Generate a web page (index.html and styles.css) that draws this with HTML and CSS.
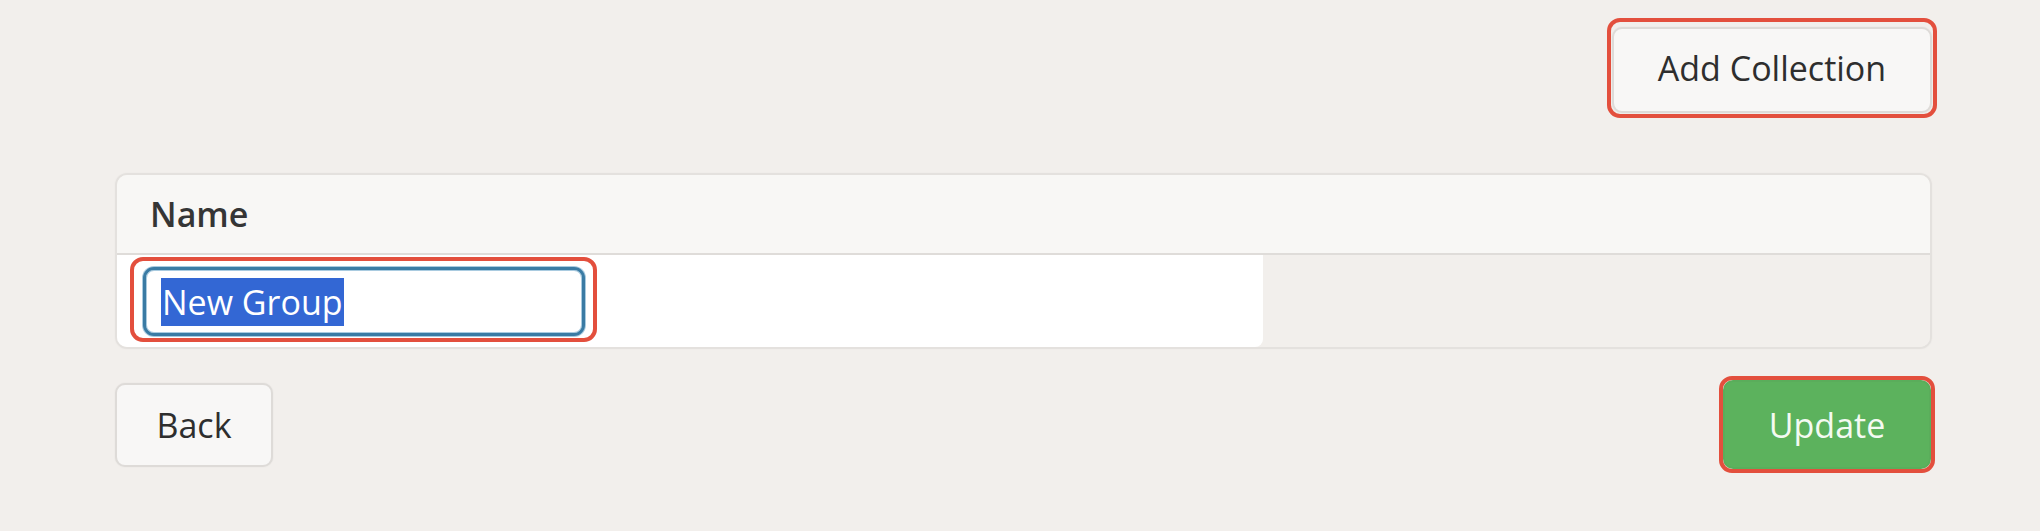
FILE: index.html
```html
<!DOCTYPE html>
<html>
<head>
<meta charset="utf-8">
<link rel="stylesheet" href="styles.css">
</head>
<body>
<div class="page">
  <div class="top-row">
    <div class="mark mark-add">
      <button class="btn btn-default btn-add">Add Collection</button>
    </div>
  </div>
  <div class="card">
    <div class="card-head">Name</div>
    <div class="card-body">
      <div class="cell">
        <div class="mark mark-input">
          <div class="input"><span class="sel">New Group</span></div>
        </div>
      </div>
    </div>
  </div>
  <div class="bottom-row">
    <button class="btn btn-default btn-back">Back</button>
    <div class="mark mark-update">
      <button class="btn btn-success btn-update">Update</button>
    </div>
  </div>
</div>
</body>
</html>
```
FILE: styles.css
```css
html, body {
  margin: 0;
  padding: 0;
  background: #f2efec;
}
body {
  font-family: "Open Sans", "Liberation Sans", sans-serif;
  color: #333;
  width: 2040px;
  height: 531px;
  overflow: hidden;
}
.page {
  padding: 27px 108px 0 115px;
}
.top-row {
  display: flex;
  justify-content: flex-end;
}
.mark {
  position: relative;
  display: inline-block;
}
.mark::after {
  content: "";
  position: absolute;
  border: 4px solid #e34f3d;
  border-radius: 13px;
  pointer-events: none;
}
.mark-add::after { top: -9px; left: -5px; right: -5px; bottom: -5px; }
.mark-update::after { top: -4px; left: -4px; right: -4px; bottom: -4px; }
.mark-input::after { top: -10px; left: -13px; right: -12px; bottom: -6px; }

.btn {
  display: flex;
  align-items: center;
  justify-content: center;
  box-sizing: border-box;
  font-family: "Open Sans", "Liberation Sans", sans-serif;
  font-size: 34px;
  padding: 0;
  margin: 0;
  border-radius: 10px;
  cursor: pointer;
}
.btn-default {
  background: #f8f7f6;
  border: 2px solid #dedbd8;
  color: #2e2e2e;
  box-shadow: 0 0 2px rgba(0,0,0,0.06);
}
.btn-add {
  width: 320px;
  height: 86px;
  padding-bottom: 4px;
}
.btn-back {
  width: 158px;
  height: 84px;
}
.btn-success {
  background: #5cb25d;
  border: 2px solid #5aad5b;
  color: #f4faf2;
}
.btn-update {
  width: 208px;
  height: 89px;
}

.card {
  margin-top: 60px;
  border: 2px solid #e4e1de;
  border-radius: 12px;
  overflow: hidden;
  box-shadow: 0 0 2px rgba(0,0,0,0.04);
}
.card-head {
  height: 78px;
  background: #f8f7f5;
  border-bottom: 2px solid #dfdcd9;
  display: flex;
  align-items: center;
  padding-left: 33px;
  font-size: 34px;
  font-weight: 600;
  color: #353535;
}
.card-body {
  height: 92px;
  background: #f2efec;
  display: flex;
}
.cell {
  width: 1146px;
  background: #fff;
  border-bottom-right-radius: 8px;
  box-sizing: border-box;
  padding: 12px 0 0 26px;
}
.input {
  box-sizing: border-box;
  width: 442px;
  height: 69px;
  border: 3px solid #3a7ba4;
  box-shadow: 0 0 0 1px #a9cbe0, inset 0 0 0 1px #a9cbe0;
  border-radius: 11px;
  background: #fff;
  display: flex;
  align-items: center;
  padding-left: 15px;
  font-size: 34px;
}
.sel {
  background: #3367d4;
  color: #fff;
  line-height: 48px;
  padding: 0 1px;
}
.bottom-row {
  margin-top: 31px;
  display: flex;
  justify-content: space-between;
  align-items: center;
  padding-right: 1px;
}
```
